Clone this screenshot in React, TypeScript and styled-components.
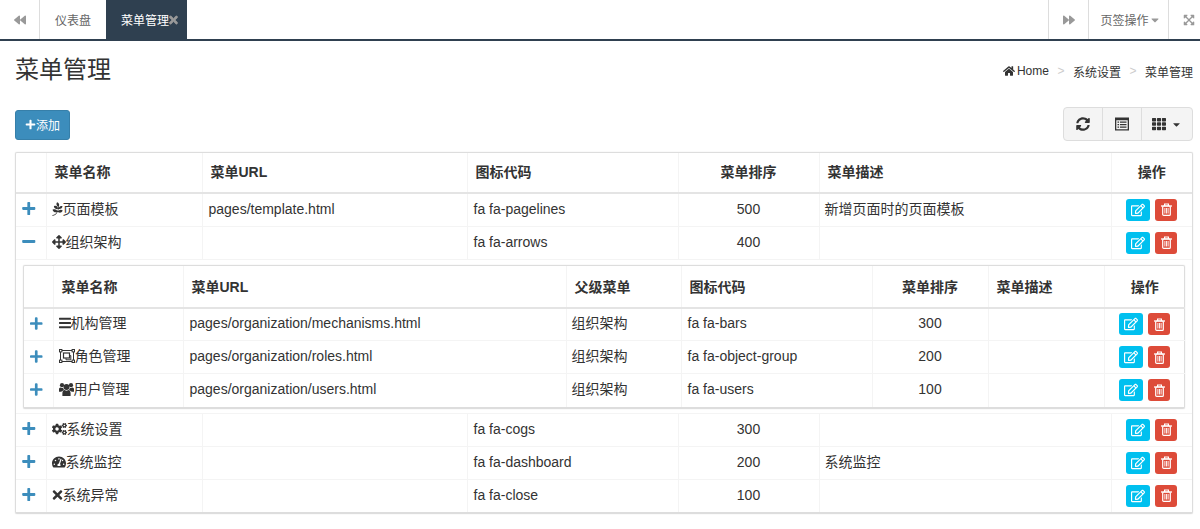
import React from "react";
import styled, { createGlobalStyle } from "styled-components";
import {
  FaBackward, FaForward, FaTimes, FaExpandArrowsAlt, FaHome, FaSyncAlt, FaTh, FaPlus, FaMinus,
  FaRegEdit, FaPagelines, FaArrowsAlt, FaBars, FaCogs, FaTachometerAlt, FaCaretDown,
} from "react-icons/fa";

const Global = createGlobalStyle`
  html, body { margin: 0; padding: 0; background: #fff; overflow: hidden; }
  body { font-family: "Liberation Sans", "Noto Sans CJK SC", sans-serif; font-size: 14px; color: #333; }
  * { box-sizing: border-box; }
`;

const Page = styled.div`width: 1200px; height: 529px; overflow: hidden;`;
const TabBar = styled.div`display: flex; height: 41px; border-bottom: 2px solid #2f4050; background: #fff;`;
const NavBtn = styled.div<{ $w: number; $side: "l" | "r"; $pl?: number }>`
  width: ${p => p.$w}px; flex: none; display: flex; align-items: center; justify-content: center; gap: 2px;
  color: #999; font-size: 12px; height: 39px;
  padding-left: ${p => p.$pl ?? 0}px;
  ${p => (p.$side === "l" ? "border-right" : "border-left")}: 1px solid #ddd;
`;
const MenuLabel = styled.span`color: #666;`;
const MenuCaret = styled(FaCaretDown)`width: 8px; height: 12px;`;
const Tab = styled.div<{ $active?: boolean }>`
  height: 39px; display: flex; align-items: center; font-size: 12px; flex: none;
  padding: ${p => (p.$active ? "0 9px 0 15px" : "0 15px")};
  color: ${p => (p.$active ? "#fff" : "#666")};
  background: ${p => (p.$active ? "#2f4050" : "#fff")};
`;
const TabClose = styled(FaTimes)`width: 9px; height: 12px; color: #999; stroke: currentColor; stroke-width: 30;`;
const Spacer = styled.div`flex: 1;`;
const Content = styled.div`padding: 0 7px 0 15px;`;
const TitleRow = styled.div`display: flex; justify-content: space-between; align-items: center; height: 57px; padding-top: 1px;`;
const Title = styled.h1`margin: 0; font-size: 24px; font-weight: 400; line-height: 34px; color: #333;`;
const Crumbs = styled.div`display: flex; align-items: center; font-size: 12px; color: #333; padding-top: 2px;
  svg { font-size: 12px; margin-right: 2px; }`;
const Sep = styled.span`color: #ccc; padding: 0 8.5px;`;
const ToolRow = styled.div`display: flex; justify-content: space-between; align-items: flex-start; height: 54px; padding-top: 9px;`;
const AddBtn = styled.div`width: 55px; height: 30px; margin-top: 3px; padding-bottom: 2px; display: flex; align-items: center; justify-content: center;
  background: #3c8dbc; border: 1px solid #367fa9; border-radius: 3px; color: #fff; font-size: 12px;
  svg { font-size: 11px; }`;
const ToolGroup = styled.div`display: flex; height: 34px; border: 1px solid #ddd; border-radius: 4px; background: #f4f4f4; color: #333;`;
const ToolBtn = styled.div<{ $w: number }>`width: ${p => p.$w}px; display: flex; align-items: center; justify-content: center; gap: 5px;
  font-size: 14px; & + & { border-left: 1px solid #ddd; }`;
const Frame = styled.div`border: 1px solid #ddd; border-bottom-width: 2px; border-radius: 2px; box-shadow: 0 0 1px #ccc;`;
const Table = styled.table`width: 100%; border-collapse: collapse; table-layout: fixed;`;
const Th = styled.th<{ $center?: boolean; $h: number; $pb: number }>`
  height: ${p => p.$h}px; padding: 0 8px ${p => p.$pb}px; font-size: 14px; font-weight: 700; color: #333;
  text-align: ${p => (p.$center ? "center" : "left")};
  border-left: 1px solid #f4f4f4; border-bottom: 2px solid #e4e4e4;
  &:first-child { border-left: 0; }
`;
const Td = styled.td<{ $center?: boolean; $cjk?: boolean }>`
  height: 33px; padding: ${p => (p.$cjk ? "0 5px 4px" : "0 6px 2px")}; font-size: 14px; color: #333; white-space: nowrap;
  text-align: ${p => (p.$center ? "center" : "left")};
  border-left: 1px solid #f4f4f4; border-bottom: 1px solid #f4f4f4;
  &:first-child { border-left: 0; }
  tr:last-child > & { border-bottom: 0; }
`;
const Toggle = styled.div`display: flex; justify-content: center; color: #3c8dbc; font-size: 15px; padding-right: 4px;`;
const NameIcon = styled.span<{ $w: number }>`
  display: inline-flex; width: ${p => p.$w}px; vertical-align: -2px; color: #333;
  svg { width: ${p => p.$w}px; height: 14px; }
`;
const Actions = styled.div`display: flex; justify-content: center; gap: 5px; padding-top: 2px;`;
const Action = styled.div<{ $bg: string; $w: number }>`
  width: ${p => p.$w}px; height: 22px; border-radius: 3px; background: ${p => p.$bg}; color: #fff;
  display: flex; align-items: center; justify-content: center; font-size: 14px;
`;
const DetailCell = styled.td`padding: 5px 7px 4px 7px; border-bottom: 1px solid #f4f4f4;`;

const TrashIcon = () => (
  <svg width="11" height="13" viewBox="0 0 11 13" fill="none" stroke="currentColor">
    <path d="M0 3h11" strokeWidth="1.3" />
    <path d="M3.6 3V1h3.8v2" strokeWidth="1.2" />
    <rect x="1.7" y="3" width="7.6" height="9.4" rx="1" strokeWidth="1.2" />
    <path d="M3.9 5v5.5M5.5 5v5.5M7.1 5v5.5" strokeWidth="0.9" />
  </svg>
);

const ListAltIcon = () => (
  <svg width="14" height="14" viewBox="0 0 14 14" fill="currentColor">
    <path fillRule="evenodd" d="M0 .5h14v13H0zM1.3 3.2v9h11.4v-9z" />
    <path d="M2.5 4.4h1.6v1.3H2.5zM5 4.4h6.5v1.3H5zM2.5 6.9h1.6v1.3H2.5zM5 6.9h6.5v1.3H5zM2.5 9.4h1.6v1.3H2.5zM5 9.4h6.5v1.3H5z" />
  </svg>
);

const UsersIcon = () => (
  <svg viewBox="0 0 15 14" fill="currentColor">
    <circle cx="7.5" cy="5" r="3" />
    <path d="M3.4 14v-2.8c0-2.1 1.2-3.1 2.4-3.1.5.4 1 .6 1.7.6s1.2-.2 1.7-.6c1.2 0 2.4 1 2.4 3.1V14z" />
    <circle cx="3" cy="3.2" r="2.1" />
    <circle cx="12" cy="3.2" r="2.1" />
    <path d="M0 9.8V7.4c0-1 .7-1.8 1.6-1.8.4.3.9.4 1.4.4.4 0 .8-.1 1.1-.2.1 1 .5 1.7 1 2.3-1.3.4-2.4 1.4-2.7 1.7z" />
    <path d="M15 9.8V7.4c0-1-.7-1.8-1.6-1.8-.4.3-.9.4-1.4.4-.4 0-.8-.1-1.1-.2-.1 1-.5 1.7-1 2.3 1.3.4 2.4 1.4 2.7 1.7z" />
  </svg>
);

const ObjectGroupIcon = () => (
  <svg viewBox="0 0 16 14" fill="none" stroke="currentColor" strokeWidth="1">
    <rect x="1.5" y="1.5" width="13" height="11" />
    <rect x="4.5" y="4" width="6" height="5" strokeWidth="1.2" />
    <path d="M7 9.2v1.6h4.8V6.6h-1.2" strokeWidth="1" />
    <g fill="#fff">
      <rect x="0.5" y="0.5" width="2.4" height="2.4" />
      <rect x="13.1" y="0.5" width="2.4" height="2.4" />
      <rect x="0.5" y="11.1" width="2.4" height="2.4" />
      <rect x="13.1" y="11.1" width="2.4" height="2.4" />
    </g>
  </svg>
);

type Row = { icon: React.ReactNode; iw: number; name: string; url: string; parent?: string; code: string; order: number; desc: string; open?: boolean };

const ActionCell = () => (
  <Actions>
    <Action $bg="#00c0ef" $w={24}><FaRegEdit /></Action>
    <Action $bg="#dd4b39" $w={22}><TrashIcon /></Action>
  </Actions>
);

const MainRow = ({ r }: { r: Row }) => (
  <tr>
    <Td $center><Toggle>{r.open ? <FaMinus /> : <FaPlus />}</Toggle></Td>
    <Td $cjk><NameIcon $w={r.iw}>{r.icon}</NameIcon>{r.name}</Td>
    <Td>{r.url}</Td>
    {r.parent !== undefined && <Td $cjk>{r.parent}</Td>}
    <Td>{r.code}</Td>
    <Td $center>{r.order}</Td>
    <Td $cjk>{r.desc}</Td>
    <Td><ActionCell /></Td>
  </tr>
);

const mainA: Row[] = [
  { icon: <FaPagelines />, iw: 11, name: "页面模板", url: "pages/template.html", code: "fa fa-pagelines", order: 500, desc: "新增页面时的页面模板" },
  { icon: <FaArrowsAlt />, iw: 14, name: "组织架构", url: "", code: "fa fa-arrows", order: 400, desc: "", open: true },
];
const mainB: Row[] = [
  { icon: <FaCogs />, iw: 15, name: "系统设置", url: "", code: "fa fa-cogs", order: 300, desc: "" },
  { icon: <FaTachometerAlt />, iw: 14, name: "系统监控", url: "", code: "fa fa-dashboard", order: 200, desc: "系统监控" },
  { icon: <FaTimes />, iw: 11, name: "系统异常", url: "", code: "fa fa-close", order: 100, desc: "" },
];
const sub: Row[] = [
  { icon: <FaBars />, iw: 12, name: "机构管理", url: "pages/organization/mechanisms.html", parent: "组织架构", code: "fa fa-bars", order: 300, desc: "" },
  { icon: <ObjectGroupIcon />, iw: 16, name: "角色管理", url: "pages/organization/roles.html", parent: "组织架构", code: "fa fa-object-group", order: 200, desc: "" },
  { icon: <UsersIcon />, iw: 15, name: "用户管理", url: "pages/organization/users.html", parent: "组织架构", code: "fa fa-users", order: 100, desc: "" },
];

const Cols = ({ w }: { w: number[] }) => <colgroup>{w.map((x, i) => <col key={i} style={{ width: x }} />)}</colgroup>;

const mainHead = ["", "菜单名称", "菜单URL", "图标代码", "菜单排序", "菜单描述", "操作"];
const subHead = ["", "菜单名称", "菜单URL", "父级菜单", "图标代码", "菜单排序", "菜单描述", "操作"];
const centered = new Set(["菜单排序", "操作"]);

export default function App() {
  return (
    <Page>
      <Global />
      <TabBar>
        <NavBtn $w={40} $side="l"><FaBackward /></NavBtn>
        <Tab>仪表盘</Tab>
        <Tab $active>菜单管理<TabClose /></Tab>
        <Spacer />
        <NavBtn $w={40} $side="r"><FaForward /></NavBtn>
        <NavBtn $w={80} $side="r" $pl={2}><MenuLabel>页签操作</MenuLabel><MenuCaret /></NavBtn>
        <NavBtn $w={32} $side="r" $pl={8}><FaExpandArrowsAlt /></NavBtn>
      </TabBar>
      <Content>
        <TitleRow>
          <Title>菜单管理</Title>
          <Crumbs><FaHome />Home<Sep>&gt;</Sep>系统设置<Sep>&gt;</Sep>菜单管理</Crumbs>
        </TitleRow>
        <ToolRow>
          <AddBtn><FaPlus />添加</AddBtn>
          <ToolGroup>
            <ToolBtn $w={38}><FaSyncAlt /></ToolBtn>
            <ToolBtn $w={39}><ListAltIcon /></ToolBtn>
            <ToolBtn $w={51}><FaTh /><FaCaretDown style={{ fontSize: 11 }} /></ToolBtn>
          </ToolGroup>
        </ToolRow>
        <Frame>
          <Table>
            <Cols w={[30, 156, 265, 211, 141, 292, 81]} />
            <thead>
              <tr>{mainHead.map((h, i) => <Th key={i} $h={40} $pb={4} $center={centered.has(h)}>{h}</Th>)}</tr>
            </thead>
            <tbody>
              {mainA.map(r => <MainRow key={r.name} r={r} />)}
              <tr>
                <DetailCell colSpan={7}>
                  <Frame>
                    <Table>
                      <Cols w={[29, 130, 383, 115, 191, 116, 116, 81]} />
                      <thead>
                        <tr>{subHead.map((h, i) => <Th key={i} $h={42} $pb={0} $center={centered.has(h)}>{h}</Th>)}</tr>
                      </thead>
                      <tbody>{sub.map(r => <MainRow key={r.name} r={r} />)}</tbody>
                    </Table>
                  </Frame>
                </DetailCell>
              </tr>
              {mainB.map(r => <MainRow key={r.name} r={r} />)}
            </tbody>
          </Table>
        </Frame>
      </Content>
    </Page>
  );
}
